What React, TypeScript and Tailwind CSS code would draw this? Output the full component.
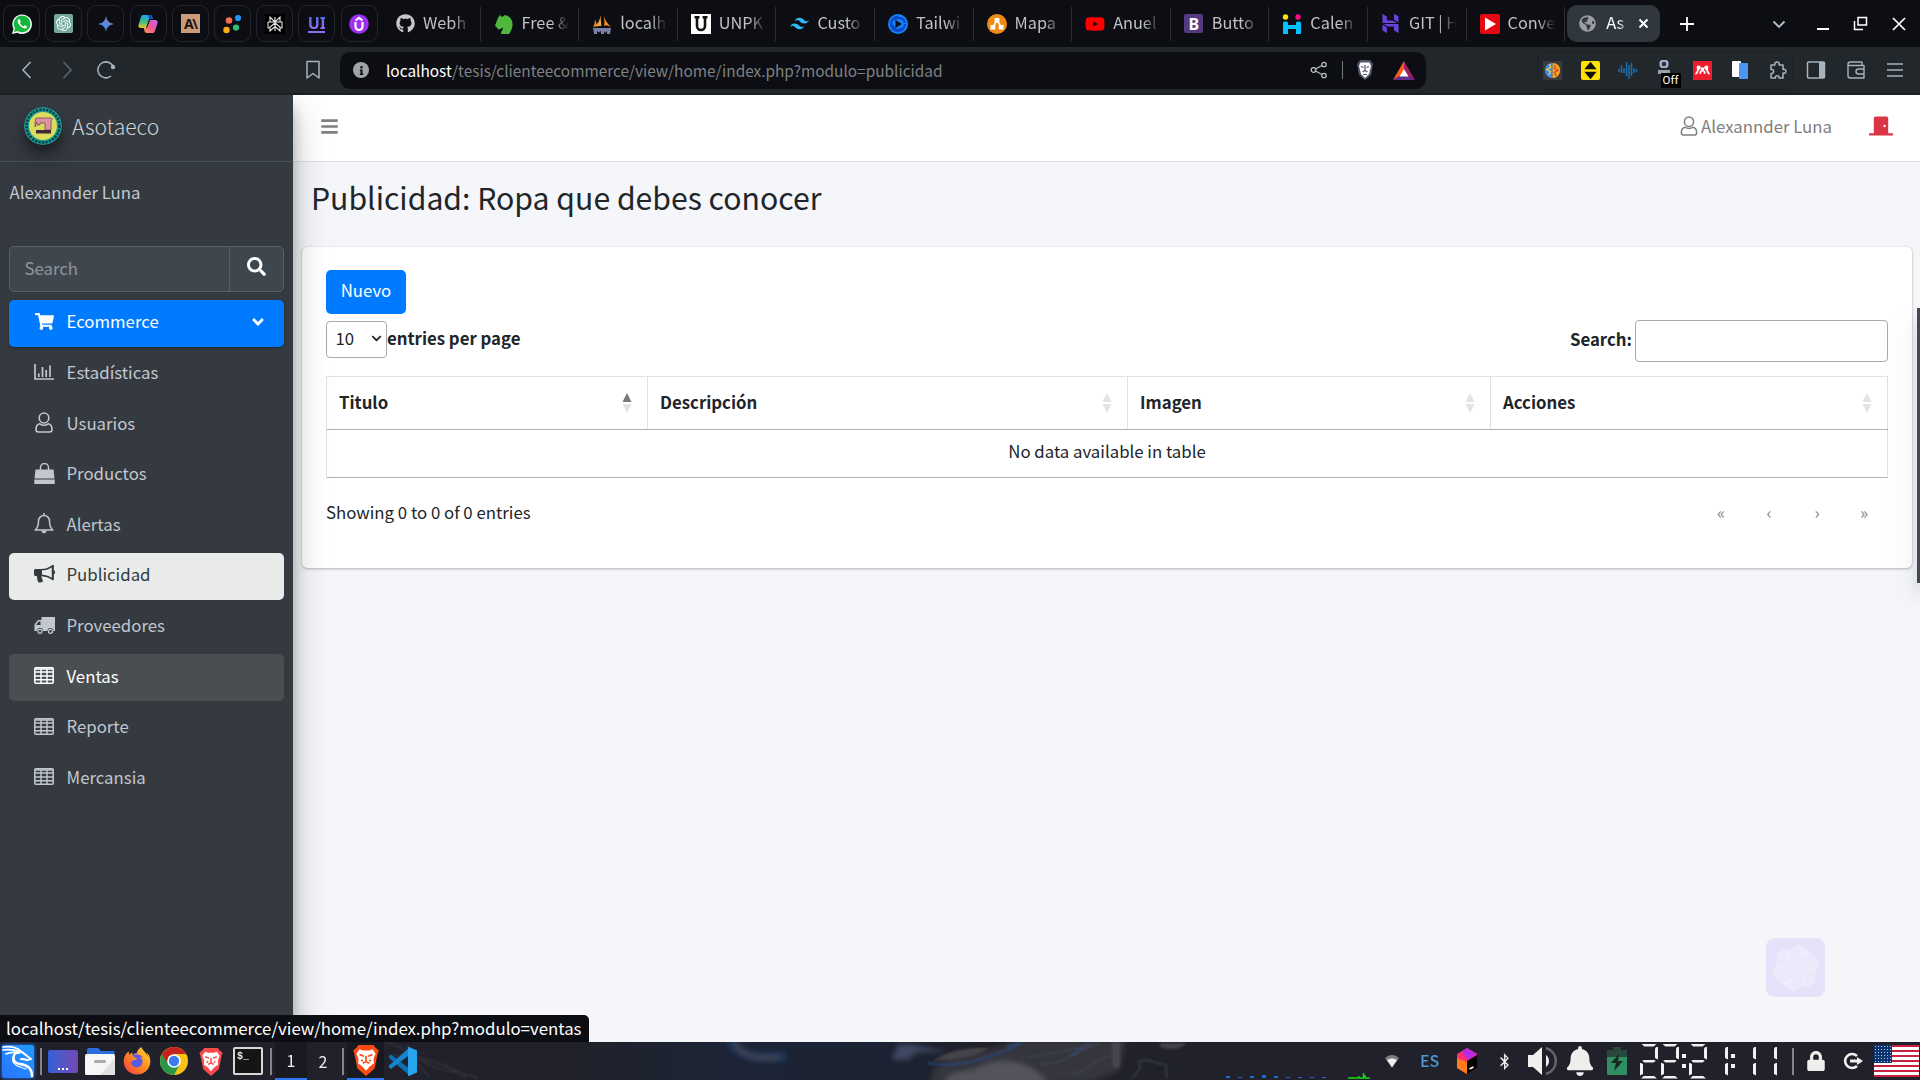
import React from "react";
import { FaBars, FaSearch, FaShoppingCart, FaAngleDown, FaGithub, FaYoutube, FaGlobeAmericas, FaDoorClosed, FaInfo, FaFirefoxBrowser, FaLock, FaBell, FaBluetoothB, FaChevronDown } from "react-icons/fa";
import { SiOpenai, SiTailwindcss, SiHostinger } from "react-icons/si";

const S = ({ vb = "0 0 20 20", c = "", children }: { vb?: string; c?: string; children: React.ReactNode }) => (
  <svg viewBox={vb} className={`block shrink-0 ${/size-|w-\[/.test(c) ? "" : "size-5"} ${c}`} fill="none">{children}</svg>
);

/* ---------- icons of the pinned tabs ---------- */
const WhatsApp = () => (
  <S>
    <path d="M0 20l1.500-5.200A9.800 9.800 0 1 1 5.300 18.700z" fill="#eef8f0" />
    <path d="M2 18l1-3.700A8.300 8.300 0 1 1 5.700 17z" fill="#12b83c" />
    <path d="M6.700 5.200c-2 1.500-.8 4.300 1.600 6.700s5.300 3.400 6.500 1.600c.4-.8.2-1.200-.3-1.500l-1.700-.8-1.200 1.300c-1.500-.5-3-2-3.700-3.500l.9-1.200-.8-2c-.4-.8-.9-.8-1.300-.6z" fill="#fff" />
  </S>
);
const OpenAI = () => <span className="flex size-[19px] items-center justify-center rounded-[2px] bg-[#74a99b]"><SiOpenai className="size-[15px] text-white" /></span>;
const Gemini = () => (
  <S>
    <defs><linearGradient id="gem" x1="0" y1="1" x2="1" y2="0"><stop stopColor="#2f7fe0" /><stop offset=".5" stopColor="#5a86e0" /><stop offset="1" stopColor="#c0707f" /></linearGradient></defs>
    <path d="M10 2c.8 4.800 3.200 7.200 8 8-4.800.8-7.200 3.200-8 8-.8-4.800-3.200-7.200-8-8 4.800-.8 7.200-3.200 8-8z" fill="url(#gem)" />
  </S>
);
const Copilot = () => (
  <S>
    <defs>
      <linearGradient id="cpa" x1="0" y1="0" x2="0" y2="1"><stop stopColor="#1ba5f5" /><stop offset=".55" stopColor="#3fc07b" /><stop offset="1" stopColor="#f5c81e" /></linearGradient>
      <linearGradient id="cpb" x1="1" y1="0" x2="0" y2="1"><stop stopColor="#b56af5" /><stop offset=".5" stopColor="#f0559b" /><stop offset="1" stopColor="#ff9a3d" /></linearGradient>
    </defs>
    <path d="M5 1h7c2 0 2 2 3 4h-4L8 14H3c-2 0-3-1-2.500-3L3 3c.4-1.300 1-2 2-2z" fill="url(#cpa)" />
    <path d="M10 1h2c2 0 2 2 3 4h-4z" fill="#1848c9" />
    <path d="M12 6h5c2 0 3 1 2.500 3L17 17c-.4 1.300-1 2-2 2H9c-2 0-3-2-3-5h3z" fill="url(#cpb)" />
  </S>
);
const Anthropic = () => <span className="flex size-[19px] items-center justify-center bg-[#cc9b7a] font-sans text-[14px] leading-none font-bold tracking-[-1.500px] text-[#191510]">A\</span>;
const Dots = () => (
  <S><circle cx="7" cy="6.500" r="3.300" fill="#fb6a4d" /><circle cx="16" cy="4" r="3.100" fill="#1d95f3" /><circle cx="14" cy="13.500" r="3.100" fill="#2fbf7d" /><circle cx="4.500" cy="16" r="3.200" fill="#ffab17" /></S>
);
const Perplexity = () => (
  <S><path d="M0 0h20v20H0z" fill="#000" /><path d="M10 3v14M10 8L5 3v5h10V3zM3 8h14v6h-2M3 8v6h2M10 9l-5 4v4l5-4.500 5 4.500v-4z" stroke="#e8e8e8" strokeWidth="1.100" /></S>
);
const UiIcon = () => <span className="flex h-[19px] w-[17px] items-center justify-center border-b-2 border-[#8f6ef0] bg-gradient-to-b from-[#3f6ff0] to-[#a06cf3] bg-clip-text font-['Noto_Sans'] text-[16px] leading-none font-bold text-transparent">UI</span>;
const UpIcon = () => (
  <S><circle cx="10" cy="10" r="9.800" fill="#a02ff5" /><path d="M6.500 8v4.500a3.500 3.500 0 0 0 7 0V8M6.500 6.500L10 3.800l3.500 2.700" stroke="#fff" strokeWidth="2.200" /></S>
);

/* ---------- favicons ---------- */
const Horse = () => <S><path d="M4 4L6 1l2 2 3-2c5 1 8 5 7.500 11-.5 3-2 6-3.500 8H7c0-3 2-4 2-6.500-2 .5-2.500 2-4.500 2L1 11.500z" fill="#4fb83c" /></S>;
const Sails = () => (
  <S>
    <path d="M8.500 1C8 6 6 10 2 13c3-1 5-1 7.500-1C9 8 8.800 5 8.500 1z" fill="#e8a33d" />
    <path d="M12 2c0 4 1 7 0 10 3-1 5 0 7 1-3-3-6-6-7-11z" fill="#f6912b" />
    <path d="M3 5c0 3-.5 5-2 8 2-1 3-1 4-2C4.500 9 3.500 7 3 5z" fill="#e08a2a" />
    <path d="M1 14h18l-1 6h-3v-3l-1.500 2L12 17v3H9v-3l-2 1.500L5 17v3H2z" fill="#7c7fa8" />
  </S>
);
const Unpkg = () => <S><path d="M0 0h20v20H0z" fill="#fff" /><path d="M3.500 3.200h5M11.500 3.200h5M6 3v9a4 4 0 0 0 8 0V3" stroke="#111" strokeWidth="2.600" /></S>;
const Swirl = () => <S><circle cx="10" cy="10" r="10" fill="#0f86fb" /><path d="M10 3a7 7 0 1 0 7 7M6 6c4-4 10-2 11 3M5 11c0 4 5 7 9 3" stroke="#1046c8" strokeWidth="2.400" /><path d="M7.500 6l6.500 4-6.500 4z" fill="#0b1020" /></S>;
const Mapa = () => <S><circle cx="10" cy="10" r="10" fill="#f08b12" /><path d="M10 6L6 13M10 6l4 7" stroke="#fff" strokeWidth="1.600" /><path d="M7.600 4h4.800v4.500H7.600zM3.500 11h4.800v4.500H3.500zM11.700 11h4.800v4.500h-4.800z" fill="#fff" /></S>;
const Bootstrap = () => <span className="flex size-[19px] items-center justify-center rounded-[2px] bg-[#553a83] font-sans text-[16px] leading-none font-bold text-white">B</span>;
const Calen = () => <S><circle cx="3.500" cy="3" r="2.700" fill="#ffe800" /><circle cx="16" cy="3" r="2.700" fill="#ff0a8a" /><path d="M1 9c0-2 5-2 5 0v2h8V9c0-2 5-2 5 0v11h-5v-5H6v5H1z" fill="#00c2ff" /></S>;
const Conve = () => <S><rect width="20" height="20" rx="2" fill="#e50914" /><path d="M5 3.500L16 10 5 16.500z" fill="#fff" /></S>;

const pinned = [WhatsApp, OpenAI, Gemini, Copilot, Anthropic, Dots, Perplexity, UiIcon, UpIcon];
const tabs: [React.ReactNode, string][] = [
  [<FaGithub className="size-[19px] text-[#c6c8ca]" />, "Webh"],
  [<Horse />, "Free &"],
  [<Sails />, "localh"],
  [<Unpkg />, "UNPK"],
  [<SiTailwindcss className="size-[19px] text-[#2fb9f5]" />, "Custo"],
  [<Swirl />, "Tailwi"],
  [<Mapa />, "Mapa"],
  [<FaYoutube className="size-[20px] text-[#f00]" />, "Anuel"],
  [<Bootstrap />, "Butto"],
  [<Calen />, "Calen"],
  [<SiHostinger className="size-[19px] text-[#6744d9]" />, "GIT | H"],
  [<Conve />, "Conve"],
];

const TabBar = () => (
  <div className="flex h-[47px] items-center bg-[#0d0e13] pl-[3px]">
    <div className="flex w-[379px] gap-[5.200px]">
      {pinned.map((Icon, i) => (
        <div key={i} className="flex size-[37px] items-center justify-center rounded-[9px] border border-[#24262c]"><Icon /></div>
      ))}
    </div>
    {tabs.map(([icon, label]) => (
      <div key={label} className="flex h-[34px] w-[98.600px] shrink-0 items-center border-r border-[#2c2e33] pl-[13px]">
        <span className="flex w-[20px] justify-center">{icon}</span>
        <span className="ml-[8px] w-[50px] pb-[3px] text-[16.300px] leading-[26px] whitespace-nowrap text-[#bfc1c4] [mask-image:linear-gradient(90deg,#000_60%,transparent_95%)]">{label}</span>
      </div>
    ))}
    <div className="ml-[2px] flex h-[37px] w-[93px] shrink-0 items-center rounded-[10px] bg-[#31383d] pl-[12px] text-white">
      <FaGlobeAmericas className="size-[17px] text-[#9b9fa3]" />
      <span className="ml-[10px] w-[20px] pb-[3px] text-[16.500px] leading-[26px] whitespace-nowrap [mask-image:linear-gradient(90deg,#000_60%,transparent_120%)]">As</span>
      <S c="ml-[12px] size-[11px]" vb="0 0 11 11"><path d="M1.500 1.500l8 8m0-8l-8 8" stroke="#fff" strokeWidth="2" /></S>
    </div>
    <S c="ml-[20px] size-[14px]" vb="0 0 14 14"><path d="M7 0v14M0 7h14" stroke="#fff" strokeWidth="1.800" /></S>
    <S c="ml-[78px] size-[14px]" vb="0 0 14 14"><path d="M1.500 4.500L7 10l5.500-5.500" stroke="#b7bfc6" strokeWidth="1.800" /></S>
    <S c="ml-[30px] size-[14px]" vb="0 0 14 14"><path d="M1 12h12" stroke="#fff" strokeWidth="2" /></S>
    <S c="ml-[23px] size-[15px]" vb="0 0 15 15"><path d="M5 1.500h8.500V9H5zM1.500 5v8.500H10" stroke="#fff" strokeWidth="1.500" /></S>
    <S c="ml-[24px] size-[14px]" vb="0 0 14 14"><path d="M1 1l12 12M13 1L1 13" stroke="#fff" strokeWidth="1.700" /></S>
  </div>
);

const Ext = ({ children }: { children: React.ReactNode }) => <span className="relative flex w-[37.500px] justify-center">{children}</span>;

const Toolbar = () => (
  <div className="flex h-[48px] items-center border-b-2 border-[#1c2024] bg-[#22272b] text-[#a5b4be]">
    <S c="ml-[17px]"><path d="M13.500 2L6 10l7.500 8" stroke="currentColor" strokeWidth="1.600" /></S>
    <S c="ml-[20px]"><path d="M6.500 2L14 10l-7.500 8" stroke="#5b656c" strokeWidth="1.600" /></S>
    <S c="ml-[19px]"><path d="M17.500 7.500A8 8 0 1 0 15 16" stroke="currentColor" strokeWidth="1.600" /><circle cx="17" cy="7" r="2.200" fill="currentColor" /></S>
    <S c="ml-[187px]"><path d="M4 1.500h12V18l-6-4.500L4 18z" stroke="currentColor" strokeWidth="1.500" strokeLinejoin="round" /></S>
    <div className="ml-[17px] flex h-[37px] w-[1086px] items-center rounded-[10px] bg-[#0d0e13]">
      <span className="ml-[13px] flex size-[16px] items-center justify-center rounded-full bg-[#a0a3a7]"><FaInfo className="size-[9px] text-[#0d0e13]" /></span>
      <span className="ml-[17px] w-[924px] text-[15.400px] leading-[26px] whitespace-nowrap text-[#7e8185]"><span className="text-white">localhost</span>/tesis/clienteecommerce/view/home/index.php?modulo=publicidad</span>
      <S c="size-[18px]" vb="0 0 18 18"><g stroke="#b9bcc0" strokeWidth="1.300"><circle cx="3.500" cy="9" r="2.300" /><circle cx="14" cy="3.500" r="2.200" /><circle cx="14" cy="14.500" r="2.200" /><path d="M5.500 8L12 4.500M5.500 10l6.500 3.500" /></g></S>
      <span className="ml-[14px] h-[18px] w-px bg-[#76797e]" />
      <S c="ml-[13px] h-[20px] w-[18px]" vb="0 0 18 20"><path d="M4 0h10l3 4-2 11-6 5-6-5L1 4z" fill="#54556b" /><path d="M4.500 2.500h9L15 6l-2 8-4 4-4-4-2-8z" fill="#fff" /><path d="M5 6.500l2.500 1M13 6.500l-2.500 1M9 5v5M6.500 12L9 10.500l2.500 1.500M7 14.500h4" stroke="#54556b" strokeWidth="1.200" /></S>
      <S c="ml-[19px] h-[19px] w-[22px]" vb="0 0 22 19"><path d="M11 0L0 19l11-6.500z" fill="#ff5a1e" /><path d="M11 0l11 19-11-6.500z" fill="#9b1f63" /><path d="M0 19h22l-11-6.500z" fill="#662d91" /><path d="M11 8l-4.500 7.500h9z" fill="#fff" /></S>
    </div>
    <div className="ml-[111px] flex h-[39px] w-[256px] shrink-0 items-center rounded-[9px] border border-[#1c2125]">
      <span className="-ml-[4px] flex items-center">
        <Ext><S c="size-[19px]"><path d="M0 0h20v20H0z" fill="#3b3a3c" /><path d="M10 2C4 2 2 6 2 10s3 8 8 8z" fill="#3d8be0" /><path d="M10 2c6 0 8 4 8 8s-3 8-8 8z" fill="#f6a51d" /><path d="M7 3l1 4-4 2 4 2-2 4" stroke="#f3d04a" strokeWidth="1.300" /><path d="M13 4l-1 4 4 2-4 2 2 4" stroke="#d8402f" strokeWidth="1.300" /></S></Ext>
        <Ext><S c="size-[19px]"><rect width="20" height="20" rx="2" fill="#ffe100" /><path d="M10 .8l6.500 8h-13zM10 19.200l-6.500-8h13z" fill="#111" /></S></Ext>
        <Ext><S><path d="M1 9v3M3.500 5v8M6 8v5M8.500 2v14M11 5v14M13.500 3v13M16 8v5M18.500 9v3" stroke="#1d6fb0" strokeWidth="1.500" /></S></Ext>
        <Ext>
          <S><rect x="4.500" y="0" width="9" height="8" rx="3" fill="#aab2bb" /><circle cx="9" cy="4" r="2.300" fill="#1a355c" /><path d="M3 10h12v4H3z" fill="#98a0a8" /></S>
          <span className="absolute top-[13px] left-[14px] h-[15px] w-[20px] bg-black text-center font-['Roboto'] text-[11.500px] leading-[15px] text-white">Off</span>
        </Ext>
        <Ext><S c="size-[19px]"><path d="M0 0h20v20H0z" fill="#eb1d2e" /><circle cx="6" cy="7" r="2.200" fill="#fff" /><circle cx="10" cy="8.500" r="1.900" fill="#fff" /><circle cx="14" cy="7" r="2.200" fill="#fff" /><path d="M2.500 13.500c2.500 0 1.800-3 3.500-5.500M17.500 13.500c-2.500 0-1.800-3-3.500-5.500M7.800 13.500c-.5-2 .5-3 2.200-3.500 1.700.5 2.700 1.500 2.200 3.500" stroke="#fff" strokeWidth="1.900" /></S></Ext>
        <Ext><S><rect x="2" y="1" width="9" height="16" rx="1" fill="#fff" /><rect x="9" y="3" width="9" height="16" rx="1" fill="#4d95ee" /></S></Ext>
        <Ext><S><path d="M3 5h4c-1.500-4 5.500-4 4 0h4v4.500c4-1.500 4 5 0 3.500V18h-4c1-3-4.500-3-3.500 0H3v-4.500c3.500 1 3.500-5 0-4z" stroke="currentColor" strokeWidth="1.500" strokeLinejoin="round" /></S></Ext>
      </span>
    </div>
    <S c="ml-[13px]"><rect x="1.500" y="2" width="17" height="16" rx="1" stroke="currentColor" strokeWidth="1.500" /><path d="M13 2h5v16h-5z" fill="currentColor" /></S>
    <S c="ml-[20px]"><path d="M2 4.500C2 3 3 2 4.500 2H16v3M2 4.500C2 6 3 5.500 4 5.500h14V18H4.500C3 18 2 17 2 15.500zM18 9h-5.500a2.300 2.300 0 0 0 0 5H18z" stroke="currentColor" strokeWidth="1.400" strokeLinejoin="round" /></S>
    <S c="ml-[19px]"><path d="M2 4h16M2 10h16M2 16h16" stroke="currentColor" strokeWidth="1.400" /></S>
  </div>
);

/* ---------- sidebar icons ---------- */
const Chart = () => <S vb="0 0 20 16" c="h-[16px] w-[20px]"><path d="M1 0v15h19M4.800 13v-3.500M8.500 13V3M12.200 13V6M16 13V1.500" stroke="currentColor" strokeWidth="1.700" /></S>;
const UserO = ({ c = "h-[21px] w-[18px]" }: { c?: string }) => <S vb="0 0 18 21" c={c}><ellipse cx="9" cy="6" rx="4.800" ry="5" stroke="currentColor" strokeWidth="1.600" /><path d="M4.800 11.800C2 12.300 1 14.500 1 17.500 1 19 2 20 3.300 20h11.400c1.300 0 2.300-1 2.300-2.500 0-3-1-5.200-3.800-5.700-2.400 1.600-6 1.600-8.400 0z" stroke="currentColor" strokeWidth="1.600" /></S>;
const Bag = () => <S vb="0 0 21 21" c="size-[21px]"><path d="M1.500 6.500h18l1 9H.5z" fill="currentColor" /><path d="M.3 16.500h20.400V21H.3z" fill="currentColor" /><path d="M6.500 9V4.500a4 4 0 0 1 8 0V9" stroke="currentColor" strokeWidth="1.500" /></S>;
const Bell = () => <S vb="0 0 20 21" c="h-[21px] w-[20px]"><path d="M10 0v2.500M1.200 17h17.600c-2.300-2-3.300-5-3.300-9A5.500 5.500 0 0 0 4.500 8c0 4-1 7-3.300 9z" stroke="currentColor" strokeWidth="1.500" strokeLinejoin="round" /><path d="M7.500 17.500h5a2.500 2.800 0 0 1-5 0z" fill="currentColor" /></S>;
const Bull = () => <S vb="0 0 21 18" c="h-[18px] w-[21px]"><path d="M0 5.500C0 4.500.8 4 1.600 4H8v7H7.500c.3 2 .5 3 1.300 4.200.4 1.300-1 2.300-2.600 2.300-1.400 0-2.200-.4-2.500-1.500L2.800 11H1.600C.7 11 0 10.400 0 9.500z" fill="currentColor" /><path d="M8 4.600c4 0 7.500-1.500 10.500-3.800v13.400C15.500 12 12 10.400 8 10.400" stroke="currentColor" strokeWidth="1.500" /><path d="M18 0h1.800v15H18zM19 5.500h1.500c.8 1.300.8 2.300 0 3.500H19z" fill="currentColor" /></S>;
const Truck = () => <S vb="0 0 21 17" c="h-[17px] w-[21px]"><path d="M7.500 0H21v14h-1.500a3 3 0 0 0-6 0H9a3 3 0 0 0-6 0H.5V7.500L4 3h3.500zM6.500 4.500H4.600L2.200 8h4.300z" fill="currentColor" fillRule="evenodd" /><circle cx="6" cy="14.300" r="2" stroke="currentColor" strokeWidth="1.300" /><circle cx="16.500" cy="14.300" r="2" stroke="currentColor" strokeWidth="1.300" /></S>;
const Table = () => <S vb="0 0 20 17" c="h-[17px] w-[20px]"><rect x=".8" y=".8" width="18.400" height="15.400" rx="1" stroke="currentColor" strokeWidth="1.500" /><path d="M.8 2h18.400M.8 5h18.400M.8 9h18.400M.8 12.700h18.400M7 2v14M13 2v14" stroke="currentColor" strokeWidth="1.400" /></S>;

const items: [React.ReactNode, string][] = [
  [<Chart />, "Estadísticas"], [<UserO />, "Usuarios"], [<Bag />, "Productos"], [<Bell />, "Alertas"], [<Bull />, "Publicidad"],
  [<Truck />, "Proveedores"], [<Table />, "Ventas"], [<Table />, "Reporte"], [<Table />, "Mercansia"],
];

const itemTone = (label: string) =>
  label === "Publicidad" ? "bg-[#e9ebea] text-[#343a40]" : label === "Ventas" ? "bg-[#494e51] text-white" : "text-[#c2c7d0]";

const Logo = () => (
  <S vb="0 0 38 38" c="size-[38px] rounded-full shadow-[0_12px_22px_rgba(0,0,0,.3),0_7px_7px_rgba(0,0,0,.23)]">
    <circle cx="19" cy="19" r="19" fill="#179a94" />
    <circle cx="19" cy="19" r="16.500" stroke="#0c3a3d" strokeWidth="2.400" strokeDasharray="2.200 1.300" />
    <circle cx="19" cy="19" r="14" fill="#dcdc5c" />
    <path d="M12 11h15c1 0 1.500 1 1 2l-1 1v9h-6v-7h-5v2h-3v-3l-2 5v-5z" fill="#dd92a5" stroke="#7d4554" strokeWidth=".8" />
    <path d="M12 23h15v3.500H12z" fill="#3d2a33" />
  </S>
);

const Sidebar = () => (
  <aside className="z-10 flex w-[293px] shrink-0 flex-col bg-[#343a40] text-[#c2c7d0] shadow-[0_16px_33px_rgba(0,0,0,.25),0_12px_12px_rgba(0,0,0,.22)]">
    <div className="flex h-[67px] items-center border-b border-[#4b545c] pb-[5px] pl-[24px]">
      <Logo />
      <span className="ml-[10px] text-[21.100px] leading-[30px] font-light text-[#d0d2d5]">Asotaeco</span>
    </div>
    <div className="mt-[16px] pl-[9.500px] leading-[28px]">Alexannder Luna</div>
    <div className="mx-[9px] mt-[40px] flex h-[46px] shrink-0 rounded-[5px] border border-[#56606a] bg-[#3f474e]">
      <div className="flex flex-1 items-center pb-[3px] pl-[14.500px] text-[#8f959b]">Search</div>
      <div className="flex w-[54px] items-center justify-center border-l border-[#56606a] pb-[6px]"><FaSearch className="size-[19px] text-white" /></div>
    </div>
    <nav className="mx-[9px] mt-[8px] flex flex-col gap-[3.600px]">
      <div className="flex h-[47px] items-center rounded-[5px] bg-[#007bff] text-white shadow-[0_1px_3px_rgba(0,0,0,.3)]">
        <span className="ml-[24px] flex w-[22px] justify-center pb-[5px]"><FaShoppingCart className="size-[19px]" /></span>
        <span className="ml-[11.500px] flex-1 pb-[5px]">Ecommerce</span>
        <FaAngleDown className="mr-[17px] mb-[3px] size-[18px]" />
      </div>
      {items.map(([icon, label]) => (
        <div key={label} className={`flex h-[47px] items-center rounded-[5px] pb-[4px] ${itemTone(label)}`}>
          <span className="ml-[24px] flex w-[22px] justify-center">{icon}</span>
          <span className="ml-[11.500px]">{label}</span>
        </div>
      ))}
    </nav>
  </aside>
);

const Sort = ({ up = false }: { up?: boolean }) => (
  <S vb="0 0 10 20" c="h-[20px] w-[10px]"><path d="M5 0l4.500 9h-9z" fill={up ? "#77797c" : "#e3e3e4"} /><path d="M5 20l4.500-9h-9z" fill="#e3e3e4" /></S>
);

const Head = ({ label, w, up = false }: { label: string; w: string; up?: boolean }) => (
  <div className={`flex items-center justify-between border-r border-[#dee2e6] pr-[15.500px] pb-px pl-[12px] ${w}`}><span className="pb-[2px]">{label}</span><Sort up={up} /></div>
);

const Content = () => (
  <main className="flex flex-1 flex-col bg-[#f4f6f9]">
    <header className="flex h-[67px] shrink-0 items-center border-b border-[#dee2e6] bg-white pb-[4px] text-[#808080]">
      <FaBars className="ml-[27px] size-[19px]" />
      <span className="mr-[3px] ml-auto"><UserO c="h-[20px] w-[18px]" /></span>
      <span className="mr-[37px]">Alexannder Luna</span>
      <FaDoorClosed className="mr-[27px] size-[24px] text-[#dc3545]" />
    </header>
    <h1 className="mt-[12px] ml-[18px] text-[30.200px] leading-[46px]">Publicidad: Ropa que debes conocer</h1>
    <section className="mt-[27px] mr-[8px] ml-[9px] flex h-[321px] flex-col items-start rounded-[5px] bg-white px-[24px] pt-[23px] shadow-[0_0_1px_rgba(0,0,0,.2),0_1px_3px_rgba(0,0,0,.25)]">
      <button className="h-[44px] w-[80px] rounded-[5px] bg-[#007bff] pb-[4px] text-white">Nuevo</button>
      <div className="mt-[6px] flex h-[42px] w-full items-center font-bold">
        <div className="mb-[4px] flex h-[37px] w-[61px] items-center justify-between rounded-[4px] border border-[#aaa] pr-[4px] pb-[2px] pl-[8.500px] font-normal">10<FaChevronDown className="size-[11px]" /></div>
        <span className="flex-1 pb-[6px]">entries per page</span>
        <span className="pb-[4px]">Search:</span>
        <div className="ml-[3px] h-[42px] w-[253px] rounded-[4px] border border-[#aaa]" />
      </div>
      <div className="mt-[14px] w-full border-t border-l border-[#dee2e6]">
        <div className="flex h-[53px] border-b border-[#b0b1b3] font-bold">
          <Head label="Titulo" w="w-[321px]" up />
          <Head label="Descripción" w="w-[480px]" />
          <Head label="Imagen" w="w-[363px]" />
          <Head label="Acciones" w="flex-1" />
        </div>
        <div className="flex h-[48px] items-center justify-center border-r border-b border-r-[#dee2e6] border-b-[#b0b1b3] pb-[5px]">No data available in table</div>
      </div>
      <div className="mt-[20px] flex w-full items-center leading-[28px]">
        <span className="flex-1">Showing 0 to 0 of 0 entries</span>
        <span className="flex pr-[1px] text-[17px] text-[#808080]">
          <span className="w-[48px] text-center">«</span><span className="w-[48px] text-center">‹</span><span className="w-[48px] text-center">›</span><span className="w-[46px] text-center">»</span>
        </span>
      </div>
    </section>
  </main>
);

/* ---------- desktop panel ---------- */
const on: Record<string, string> = { "2": "abged", "1": "bc" };
const Digit = ({ v }: { v: string }) => {
  const s = on[v];
  return (
    <span className="grid h-[35px] w-[18px] grid-cols-[4px_10px_4px] grid-rows-[3px_13px_3px_13px_3px]">
      {s.includes("a") && <i className="col-span-3 col-start-1 row-start-1 bg-[#f0f0ee] [clip-path:polygon(6%_0,94%_0,76%_100%,24%_100%)]" />}
      {s.includes("b") && <i className="col-start-3 row-start-2 bg-[#f0f0ee] [clip-path:polygon(25%_15%,100%_-10%,100%_100%,25%_88%)]" />}
      {s.includes("g") && <i className="col-span-3 col-start-1 row-start-3 bg-[#f0f0ee] [clip-path:polygon(12%_50%,26%_0,74%_0,88%_50%,74%_100%,26%_100%)]" />}
      {s.includes("e") && <i className="col-start-1 row-start-4 bg-[#f0f0ee] [clip-path:polygon(0_0,75%_12%,75%_88%,0_100%)]" />}
      {s.includes("c") && <i className="col-start-3 row-start-4 bg-[#f0f0ee] [clip-path:polygon(25%_12%,100%_0,100%_100%,25%_88%)]" />}
      {s.includes("d") && <i className="col-span-3 col-start-1 row-start-5 bg-[#f0f0ee] [clip-path:polygon(24%_0,76%_0,94%_100%,6%_100%)]" />}
    </span>
  );
};
const Colon = () => <span className="flex w-[4px] flex-col gap-[6px]"><i className="h-[4px] bg-[#f0f0ee]" /><i className="h-[4px] bg-[#f0f0ee]" /></span>;

const Lion = ({ bg, c }: { bg: string; c: string }) => (
  <S vb="0 0 26 30" c={c}><path d="M6 1h14l2 2.500L25 6l-1 3-3 14-8 7-8-7L2 9 1 6l3-2.500z" fill={bg} /><path d="M7 5l3 1h6l3-1 3 4-2 5 .5 4-4 3L13 25l-3.500-4-4-3 .5-4-2-5z" fill="#fff" /><path d="M7 10l4 1.500M19 10l-4 1.500M13 11v5M10 18l3-1.500 3 1.500M8.500 15l1.500 1M17.500 15L16 16" stroke={bg} strokeWidth="1.600" /></S>
);

const Dragon = () => (
  <S vb="0 0 32 33" c="h-[33px] w-[32px]">
    <g stroke="#fff" strokeLinecap="round" strokeLinejoin="round">
      <path d="M1 2c6-1 13 0 18 4M1 5c6-1 12 0 17 2M4 9c3-1.500 8-2 13-1" strokeWidth="1.600" />
      <path d="M17 6c4 1 6 3 8 5l4 3-4 1c-2-1-4-1-6-1" strokeWidth="2" />
      <path d="M17 7.500c-7 0-8 10 1 11.500 8 1 12 5 12 12" strokeWidth="2.400" />
      <path d="M12 10c-5 9 5 12 12 14" strokeWidth="1.200" />
    </g>
  </S>
);

const Code = () => (
  <S vb="0 0 29 29" c="ml-[4px] size-[29px]">
    <path d="M1 9l2-1.500L22 22v7L1 11z" fill="#0f6fb5" />
    <path d="M1 20.500L3 22 22 7.500V0L1 18.500z" fill="#1585cc" />
    <path d="M21 0l8 3.500v22L21 29c-.8 0-1-.6-1-1V1c0-.5.2-1 1-1z" fill="#27a5ef" />
  </S>
);

const Wallpaper = () => (
  <svg viewBox="0 0 1000 38" className="absolute top-0 left-[380px] h-[38px] w-[1000px]" fill="none">
    <defs>
      <filter id="soft" filterUnits="userSpaceOnUse" x="0" y="-30" width="1000" height="100"><feGaussianBlur stdDeviation="2.600" /></filter>
      <filter id="edge" filterUnits="userSpaceOnUse" x="0" y="-30" width="1000" height="100"><feGaussianBlur stdDeviation="1" /></filter>
      <linearGradient id="night"><stop stopColor="#1c2435" stopOpacity="0" /><stop offset=".35" stopColor="#1c2435" /><stop offset=".8" stopColor="#1c2232" /><stop offset="1" stopColor="#1c2232" stopOpacity="0" /></linearGradient>
    </defs>
    <path d="M200 0h400v38H200z" fill="url(#night)" />
    <g filter="url(#soft)">
      <path d="M350-2c8 14 20 20 56 16" stroke="#1f3558" strokeWidth="10" /><path d="M354 0c8 12 20 19 46 15" stroke="#3c4255" strokeWidth="5" />
      <path d="M512 18l6-16h12l38 8-30 0-10 8z" fill="#3c4761" />
      <path d="M556 26c14-16 50-14 86-28h104l-6 30-30 12H550c2-8 2-10 6-14z" fill="#36363e" />
      <path d="M564 42c4-16 18-8 38-18 16-8 50-8 66 18z" fill="#53535b" />
    </g>
    <g filter="url(#edge)">
      <path d="M548 21c30 6 66-6 94-20l-16 3M690 14L710 1" stroke="#2a4570" strokeWidth="2.200" />
      <path d="M553 19c14-10 34-14 56-13-10 8-30 12-56 13z" fill="#454349" />
      <path d="M732 0h8v24c-4 4-8 2-8-4zM780 1h26c-4 6-14 8-26 4z" fill="#4a4a52" opacity=".8" />
      <path d="M640 16c30-2 50-10 78-14M660 22c30 0 34-14 60-20M690 32c20-2 20-14 40-18M758 20c8-4 14 0 24 2 10 0 0 8 6 14M752 36c8-8 10-12 6-16" stroke="#484952" strokeWidth="1.600" opacity=".75" />
      <path d="M4 0c20 4 26 12 44 22 14 8 36 8 50 14M28 2c-2 10 12 22 22 34M10 14c26-2 60 8 76 22" stroke="#3a3b44" strokeWidth="2" opacity=".6" />
    </g>
  </svg>
);

const Sep = ({ c }: { c: string }) => <span className={`h-[27px] w-[2px] shrink-0 bg-[#85868a] ${c}`} />;

const Flag = () => (
  <div className="relative ml-[11px] flex h-[33px] w-[45px] flex-col">
    {Array.from({ length: 13 }, (_, i) => <i key={i} className={`flex-1 ${i % 2 ? "bg-white" : "bg-[#c8203f]"}`} />)}
    <i className="absolute top-0 left-0 h-[18px] w-[18px] bg-[#0b3470] bg-[radial-gradient(#b9c8de_.7px,transparent_1px)] bg-[size:3px_3px]" />
  </div>
);

const Panel = () => (
  <footer className="relative flex h-[38px] items-center overflow-hidden bg-[#20212a] text-[#eeeeec]">
    <Wallpaper />
    <div className="relative flex h-full w-full items-center">
      <span className="ml-[2px] flex h-[33px] w-[32px] items-center justify-center rounded-[2px] bg-gradient-to-tr from-[#2a72ff] to-[#219bff] shadow-[0_0_4px_#2777ff]"><Dragon /></span>
      <Sep c="ml-[6px]" />
      <span className="ml-[6px] flex h-[23px] w-[30px] items-end justify-center gap-[2px] rounded-[2px] bg-gradient-to-r from-[#2f60d8] to-[#7048b4] pb-[3px]"><i className="size-[2px] bg-white" /><i className="size-[2px] bg-white" /><i className="size-[2px] bg-white" /></span>
      <S vb="0 0 30 27" c="ml-[7px] h-[27px] w-[30px]"><path d="M2 2c0-1 .5-2 2-2h9l3 3h12c1 0 1.500.5 1.500 1.500V12H2z" fill="#2a6de0" /><rect y="6" width="30" height="21" rx="1.500" fill="#f7f7f7" /><path d="M15 27L30 10v15.500c0 1-.5 1.500-1.500 1.500z" fill="#e0e0e0" /><rect x="9" y="12" width="12" height="3" rx="1.500" fill="#aaa" /></S>
      <span className="relative ml-[8px] flex size-[28px] items-center justify-center"><i className="absolute size-[16px] rounded-full bg-[#5a5be8]" /><svg className="absolute size-0"><defs><linearGradient id="fx" x1="1" y1="0" x2="0" y2="1"><stop stopColor="#ffd83d" /><stop offset=".5" stopColor="#ff8a1f" /><stop offset="1" stopColor="#f4364c" /></linearGradient></defs></svg><FaFirefoxBrowser className="relative size-[28px] fill-[url(#fx)]" /></span>
      <S vb="0 0 28 28" c="ml-[9px] size-[28px]"><circle cx="14" cy="14" r="14" fill="#fbc116" /><path d="M14 14L1.900 7A14 14 0 0 0 14 28l6-11z" fill="#279847" /><path d="M1.900 7a14 14 0 0 1 24.200 0H14l-6 10z" fill="#c5221f" /><circle cx="14" cy="14" r="6.800" fill="#fff" /><circle cx="14" cy="14" r="5.200" fill="#3b7ded" /></S>
      <Lion bg="#fb4a4c" c="ml-[10px] h-[29px] w-[26px]" />
      <span className="ml-[9px] h-[28px] w-[30px] rounded-[2px] border-2 border-[#d8d8d8] bg-[#151515] pl-[2px] font-mono text-[10px] leading-[16px] font-bold">$_</span>
      <Sep c="ml-[7px]" />
      <span className="ml-[3px] flex h-full w-[32px] items-center justify-center border-b-2 border-[#2f75f5] bg-[#191a21] text-[16px]">1</span>
      <span className="flex w-[32px] justify-center text-[16px]">2</span>
      <Sep c="ml-[3px]" />
      <span className="ml-[3px] flex h-full w-[37px] items-center justify-center border-b-2 border-[#2f75f5] bg-[#191a21]"><Lion bg="#ff4a14" c="h-[32px] w-[28px]" /></span>
      <Code />
      <span className="ml-auto flex h-full w-[104px] items-end gap-[8px] pb-[2px]">
        {[2, 1, 2, 3, 2, 1, 1, 1, 1].map((h, i) => <i key={i} className="w-[4px] bg-[#2068cf]" style={{ height: h }} />)}
      </span>
      <S vb="0 0 22 6" c="mb-[1px] ml-[18px] h-[6px] w-[22px] self-end"><path d="M0 5h22M4 5V4M11 5V3M15.500 5V0M17 5V2" stroke="#15d615" strokeWidth="1.500" /></S>
      <S vb="0 0 14 14" c="ml-[15px] size-[14px]"><path d="M7 13.500L0 4c4-4 10-4 14 0z" fill="#7c7d82" /><path d="M7 13.500L2 6c3-2 7-2 10 0z" fill="#f0f0ee" /></S>
      <span className="ml-[21px] w-[20px] pb-[2px] text-[16px] leading-none font-medium text-[#4a9ad8]">ES</span>
      <S vb="0 0 20 26" c="ml-[17px] h-[26px] w-[20px]"><path d="M10 0l10 6v14l-10 6L0 20V6z" fill="#ff2f6e" /><path d="M0 10v10l10 6V14z" fill="#ff7a1a" /><path d="M10 0l10 6-9 6-6-8z" fill="#b92be0" /><path d="M10 13l10-6v13l-10 6z" fill="#000" /><path d="M12.500 21l4-2" stroke="#fff" strokeWidth="1.500" /></S>
      <FaBluetoothB className="ml-[19px] size-[17px]" />
      <S vb="0 0 30 28" c="ml-[15px] h-[28px] w-[30px]"><path d="M0 8h5l9-8v28l-9-8H0z" fill="#f0f0ee" /><path d="M18 8c4 3 4 9 0 12z" fill="#f0f0ee" /><path d="M18 1c13 4 13 22 0 26" stroke="#65666c" strokeWidth="2.500" /></S>
      <FaBell className="ml-[7px] size-[30px]" />
      <S vb="0 0 20 28" c="ml-[12px] h-[28px] w-[20px]"><path d="M6 0h8v3h6v7H0V3h6z" fill="#28473d" /><path d="M0 10h20v17a1 1 0 0 1-1 1H1a1 1 0 0 1-1-1z" fill="#2f8f63" /><path d="M12 7L4 16h5l-2 8 9-10h-5z" fill="#15281f" /></S>
      <div className="ml-[13px] flex w-[138px] items-center gap-[3px]" aria-label="22:21:11">
        <Digit v="2" /><Digit v="2" /><Colon /><Digit v="2" /><Digit v="1" /><Colon /><Digit v="1" /><Digit v="1" />
      </div>
      <Sep c="ml-[14px]" />
      <FaLock className="ml-[12px] size-[20px]" />
      <S vb="0 0 20 18" c="ml-[17px] h-[18px] w-[20px]"><path d="M14 4A7 7 0 1 0 14 14" stroke="#f0f0ee" strokeWidth="2.600" /><path d="M7 7.500h7V5l6 4-6 4v-2.500H7z" fill="#f0f0ee" /></S>
      <Flag />
      <span className="w-[1px] shrink-0" />
    </div>
  </footer>
);

export default function App() {
  return (
    <div className="relative flex h-[1080px] w-[1920px] flex-col overflow-hidden bg-[#f4f6f9] font-['Noto_Sans_CJK_SC','Noto_Sans',sans-serif] text-[16.800px] leading-[24px] text-[#212529]">
      <TabBar />
      <Toolbar />
      <div className="relative flex h-[947px] overflow-hidden">
        <Sidebar />
        <Content />
        <div className="absolute top-[213px] left-[1917px] h-[275px] w-[3px] bg-[#454a50] shadow-[0_16px_33px_rgba(0,0,0,.25),0_12px_12px_rgba(0,0,0,.22)]" />
        <div className="absolute top-[843px] left-[1766px] flex size-[59px] items-center justify-center rounded-[9px] bg-[#e4e1f9]">
          <S vb="0 0 46 46" c="size-[54px]">
            {[0, 60, 120, 180, 240, 300].map((a) => <path key={a} d="M23 23L15 18V8l9-5c6 0 9 3 10 8l-11 4z" fill="#f6f5fc" fillOpacity=".4" transform={`rotate(${a} 23 23)`} />)}
          </S>
        </div>
        <div className="absolute bottom-0 left-0 z-20 flex h-[27px] w-[589px] items-center rounded-tr-[5px] bg-[#0d0e13] pb-px pl-[6px] text-[16.820px] whitespace-nowrap text-white">localhost/tesis/clienteecommerce/view/home/index.php?modulo=ventas</div>
      </div>
      <Panel />
    </div>
  );
}
